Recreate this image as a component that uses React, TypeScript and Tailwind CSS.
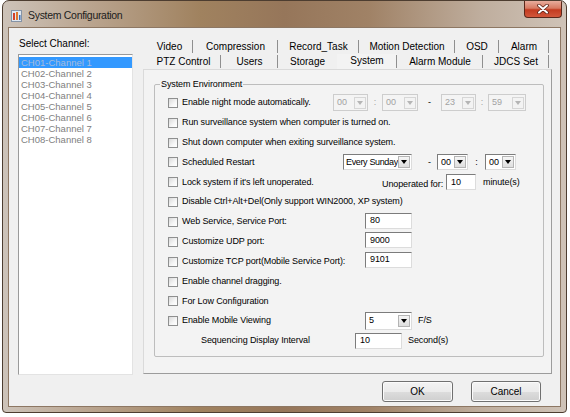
import React from 'react';

const CHANNELS = Array.from({ length: 8 }, (_, i) => `CH0${i + 1}-Channel ${i + 1}`);

// tab widths measured from the separators
const TABS_TOP = [
  { label: 'Video', w: 'w-[47px]' },
  { label: 'Compression', w: 'w-[85px]' },
  { label: 'Record_Task', w: 'w-[81px]' },
  { label: 'Motion Detection', w: 'w-[96px]' },
  { label: 'OSD', w: 'w-[44px]' },
  { label: 'Alarm', w: 'w-[50px]' },
];

const TABS_BOTTOM = [
  { label: 'PTZ Control', w: 'w-[75px]' },
  { label: 'Users', w: 'w-[57px]' },
  { label: 'Storage', w: 'w-[59px]', noSep: true },
  { label: 'System', w: 'w-[60px]', active: true },
  { label: 'Alarm Module', w: 'w-[86px]' },
  { label: 'JDCS Set', w: 'w-[66px]' },
];

function Check() {
  return (
    <span className="w-[10px] h-[10px] shrink-0 border border-[#8e8f8f] bg-[linear-gradient(135deg,#d9d9d9_0%,#f6f6f6_60%,#ffffff_100%)]" />
  );
}

function CheckLabel({ label, className = '' }: { label: string; className?: string }) {
  return (
    <div className={`flex items-center gap-[4px] shrink-0 ${className}`}>
      <Check />
      <span className="whitespace-nowrap">{label}</span>
    </div>
  );
}

function Arrow({ disabled }: { disabled?: boolean }) {
  return (
    <span
      className={`ml-auto mr-[1px] w-[12px] h-[12px] shrink-0 flex items-center justify-center border ${
        disabled ? 'border-[#d6d6d6] bg-[#f3f3f3]' : 'border-[#b4b4b4] bg-[linear-gradient(180deg,#f6f6f6,#dedede)]'
      }`}
    >
      <svg width="6" height="4" viewBox="0 0 6 4">
        <path d="M0 0h6L3 4z" fill={disabled ? '#b5b5b5' : '#000'} />
      </svg>
    </span>
  );
}

function Combo({ value, className, disabled }: { value: string; className: string; disabled?: boolean }) {
  return (
    <div
      className={`flex items-center shrink-0 border pl-[3px] ${className} ${
        disabled
          ? 'border-[#cdcdcd] bg-[#f4f4f4] text-[#a2a2a2]'
          : 'border-[#7c7c7c] border-r-[#dcdcdc] border-b-[#dcdcdc] bg-white text-black'
      }`}
    >
      <span className="whitespace-nowrap">{value}</span>
      <Arrow disabled={disabled} />
    </div>
  );
}

function TextBox({ value, className }: { value: string; className: string }) {
  return (
    <div
      className={`flex items-center shrink-0 pl-[4px] bg-white border border-[#7c7c7c] border-r-[#dcdcdc] border-b-[#dcdcdc] ${className}`}
    >
      {value}
    </div>
  );
}

function Row({ children }: { children: React.ReactNode }) {
  return <div className="h-[19.85px] flex items-center">{children}</div>;
}

function Sep({ children, className }: { children: string; className: string }) {
  return <span className={`shrink-0 ${className}`}>{children}</span>;
}

export default function App() {
  return (
    <div className="w-[570px] h-[417px] bg-white font-['Liberation_Sans',Arial,sans-serif] text-black">
      {/* window frame */}
      <div className="ml-[2px] w-[565px] h-[413px] flex flex-col rounded-t-[7px] rounded-b-[4px] border border-[#4d3d30] overflow-hidden bg-[linear-gradient(90deg,#cdc3b9_0%,#baa590_15%,#a0825f_35%,#96765a_50%,#a08266_65%,#bfae9e_85%,#cfc3b7_100%)]">
        {/* title bar */}
        <div className="h-[26px] shrink-0 flex items-start">
          <svg width="11" height="12" viewBox="0 0 11 12" className="mt-[9px] ml-[8px]">
            <rect x="0.5" y="0.5" width="10" height="11" fill="#dfe8f2" stroke="#8593a6" />
            <rect x="2" y="3" width="2" height="7" fill="#d2402a" />
            <rect x="5" y="2" width="2" height="8" fill="#e0772f" />
            <rect x="8" y="5" width="1.5" height="5" fill="#3f6fb5" />
          </svg>
          <span className="mt-[7px] ml-[6px] text-[10.5px] leading-[14px] tracking-[-0.3px] text-[#1c1c1c]">
            System Configuration
          </span>
          <div className="ml-auto mr-[4px] w-[38px] h-[17px] flex items-center justify-center rounded-b-[4px] border border-t-0 border-[#5a281b] bg-[linear-gradient(180deg,#e8ad9d_0%,#d77a62_45%,#c33b20_55%,#d2573b_100%)]">
            <svg width="12" height="10" viewBox="0 0 12 10">
              <path d="M2 1.5l8 7M10 1.5l-8 7" stroke="#5b2418" strokeWidth="3.6" strokeLinecap="round" />
              <path d="M2 1.5l8 7M10 1.5l-8 7" stroke="#ffffff" strokeWidth="2" strokeLinecap="round" />
            </svg>
          </div>
        </div>

        {/* client area */}
        <div className="flex-1 mx-[5px] mb-[5px] flex flex-col bg-[#f0f0f0] border border-[#8d7763]">
          <div className="flex items-start pt-[8px] pl-[9px]">
            {/* channel list */}
            <div className="w-[115px] shrink-0">
              <div className="h-[15px] leading-[15px] text-[10px] pl-[1px]">Select Channel:</div>
              <div className="mt-[3px] h-[321px] bg-white border border-[#9a9a9a] border-r-[#e3e3e3] border-b-[#e3e3e3] pt-[2px] text-[9.5px] leading-[11px] text-[#808080]">
                {CHANNELS.map((c, i) => (
                  <div
                    key={c}
                    className={`h-[11px] pl-[2px] whitespace-nowrap ${i === 0 ? 'bg-[#3399ff] text-[#a7bcdc]' : ''}`}
                  >
                    {c}
                  </div>
                ))}
              </div>
            </div>

            {/* tabs + page */}
            <div className="ml-[10px] w-[409px] pt-[3px]">
              <div className="pl-[3px] flex h-[15px] text-[10px]">
                {TABS_TOP.map(t => (
                  <div key={t.label} className={`${t.w} flex items-center justify-center relative`}>
                    <span>{t.label}</span>
                    <span className="absolute right-0 top-[1px] w-px h-[13px] bg-[#8f8f8f]" />
                  </div>
                ))}
              </div>
              <div className="pl-[3px] flex h-[15px] text-[10px]">
                {TABS_BOTTOM.map(t => (
                  <div
                    key={t.label}
                    className={`${t.w} flex items-center justify-center relative ${t.active ? 'pb-[2px] bg-[#f3f3f3]' : ''}`}
                  >
                    <span>{t.label}</span>
                    {!t.noSep && <span className="absolute right-0 top-[1px] w-px h-[13px] bg-[#8f8f8f]" />}
                  </div>
                ))}
              </div>

              {/* tab page */}
              <div className="h-[305px] bg-[#f3f3f3] border border-[#dadada] border-r-[#9c9c9c] border-b-[#9c9c9c] pl-[10px] pr-[7px] pt-[9px] text-[9px] tracking-[-0.1px]">
                <fieldset className="h-[278px] border border-[#bdbdbd] rounded-[2px]">
                  <legend className="ml-[5px] px-[1px] leading-[11px]">System Environment</legend>
                  <div className="pl-[13px] pt-[3px]">
                    <Row>
                      <CheckLabel label="Enable night mode automatically." className="w-[165px]" />
                      <Combo value="00" disabled className="w-[35px] h-[17px]" />
                      <Sep className="w-[14px] text-center text-[#a2a2a2]">:</Sep>
                      <Combo value="00" disabled className="w-[36px] h-[17px]" />
                      <Sep className="w-[23px] text-center">-</Sep>
                      <Combo value="23" disabled className="w-[35px] h-[17px]" />
                      <Sep className="w-[12px] text-center text-[#a2a2a2]">:</Sep>
                      <Combo value="59" disabled className="w-[38px] h-[17px]" />
                    </Row>
                    <Row>
                      <CheckLabel label="Run surveillance system when computer is turned on." />
                    </Row>
                    <Row>
                      <CheckLabel label="Shut down computer when exiting surveillance system." />
                    </Row>
                    <Row>
                      <CheckLabel label="Scheduled Restart" className="w-[175px]" />
                      <div className="w-[69px] h-[16px] shrink-0 flex items-center pl-[2px] bg-white border border-[#7c7c7c] border-r-[#dcdcdc] border-b-[#dcdcdc] tracking-[-0.35px]">
                        <span className="whitespace-nowrap">Every Sunday</span>
                        <Arrow />
                      </div>
                      <Sep className="w-[25px] text-right pr-[6px]">-</Sep>
                      <Combo value="00" className="w-[31px] h-[16px]" />
                      <Sep className="w-[17px] text-center">:</Sep>
                      <Combo value="00" className="w-[31px] h-[16px]" />
                    </Row>
                    <Row>
                      <CheckLabel label="Lock system if it's left unoperated." className="w-[214px]" />
                      <span className="w-[64px] mt-[4px] whitespace-nowrap">Unoperated for:</span>
                      <TextBox value="10" className="w-[30px] h-[16px]" />
                      <span className="ml-[7px] mt-[1px]">minute(s)</span>
                    </Row>
                    <Row>
                      <CheckLabel label="Disable Ctrl+Alt+Del(Only support WIN2000, XP system)" />
                    </Row>
                    <Row>
                      <CheckLabel label="Web Service, Service Port:" className="w-[197px]" />
                      <TextBox value="80" className="w-[47px] h-[16px] -mt-[2px]" />
                    </Row>
                    <Row>
                      <CheckLabel label="Customize UDP port:" className="w-[197px]" />
                      <TextBox value="9000" className="w-[47px] h-[16px] -mt-[3px]" />
                    </Row>
                    <Row>
                      <CheckLabel label="Customize TCP port(Mobile Service Port):" className="w-[197px]" />
                      <TextBox value="9101" className="w-[47px] h-[16px] -mt-[3px]" />
                    </Row>
                    <Row>
                      <CheckLabel label="Enable channel dragging." />
                    </Row>
                    <Row>
                      <CheckLabel label="For Low Configuration" />
                    </Row>
                    <Row>
                      <CheckLabel label="Enable Mobile Viewing" className="w-[197px]" />
                      <Combo value="5" className="w-[47px] h-[18px]" />
                      <span className="ml-[6px]">F/S</span>
                    </Row>
                    <Row>
                      <span className="ml-[33px] w-[154px] whitespace-nowrap">Sequencing Display Interval</span>
                      <TextBox value="10" className="w-[47px] h-[16px]" />
                      <span className="ml-[6px] -mt-[1px]">Second(s)</span>
                    </Row>
                  </div>
                </fieldset>
              </div>
            </div>
          </div>

          {/* dialog buttons */}
          <div className="mt-[6px] flex justify-end gap-[18px] pr-[19px]">
            <button className="w-[71px] h-[21px] flex items-center justify-center rounded-[3px] border border-[#707070] shadow-[inset_0_0_0_1px_#fbfbfb] bg-[linear-gradient(180deg,#f3f3f3_0%,#ebebeb_50%,#dddddd_51%,#cfcfcf_100%)] text-[10px]">
              OK
            </button>
            <button className="w-[70px] h-[21px] flex items-center justify-center rounded-[3px] border border-[#707070] shadow-[inset_0_0_0_1px_#fbfbfb] bg-[linear-gradient(180deg,#f3f3f3_0%,#ebebeb_50%,#dddddd_51%,#cfcfcf_100%)] text-[10px]">
              Cancel
            </button>
          </div>
        </div>
      </div>
    </div>
  );
}
